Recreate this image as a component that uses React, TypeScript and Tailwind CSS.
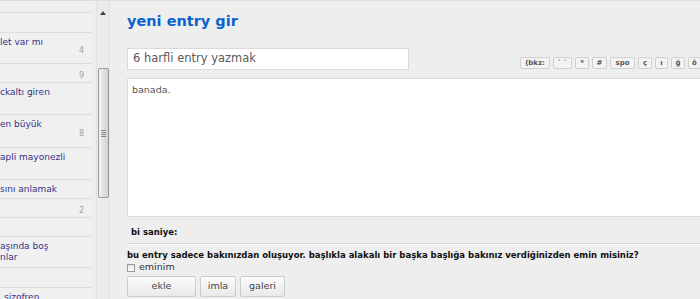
import React from 'react';

type Topic = { h: number; lines: string[]; count?: string; indent?: number };

const topics: Topic[] = [
  { h: 12, lines: [] },
  { h: 20, lines: [] },
  { h: 31, lines: ['let var mı'], count: '4' },
  { h: 19, lines: [], count: '9' },
  { h: 32, lines: ['ckaltı giren'] },
  { h: 33, lines: ['en büyük'], count: '8' },
  { h: 32, lines: ['apli mayonezli'] },
  { h: 19, lines: ['sını anlamak'] },
  { h: 19, lines: [], count: '2' },
  { h: 19, lines: [] },
  { h: 31, lines: ['aşında boş', 'nlar'] },
  { h: 20, lines: [] },
  { h: 30, lines: ['sizofren'], indent: 4 },
];

const toolButtons = [
  { label: '(bkz:', w: 'w-[30px]' },
  { label: '` `', w: 'w-[19px]' },
  { label: '*', w: 'w-[14px]' },
  { label: '#', w: 'w-[15px]' },
  { label: 'spo', w: 'w-[25px]' },
  { label: 'ç', w: 'w-[14px]' },
  { label: 'ı', w: 'w-[13px]' },
  { label: 'ğ', w: 'w-[14px]' },
  { label: 'ö', w: 'w-[13px]' },
];

const Sidebar: React.FC = () => {
  return (
    <div className="w-[92px] shrink-0 overflow-hidden bg-[#f0f0f0]">
      {topics.map((t, i) => (
        <div
          key={i}
          className="flex justify-between border-b border-[#dcdcdc] text-[9px] leading-[11px]"
          style={{ height: t.h }}
        >
          <div className="pt-[4px] text-[#35308a] whitespace-nowrap" style={{ paddingLeft: t.indent ?? 0 }}>
            {t.lines.map((l, j) => (
              <div key={j}>{l}</div>
            ))}
          </div>
          {t.count && (
            <div className="self-center pt-[4px] pr-[8px] text-[8px] text-[#a0a0a0]">{t.count}</div>
          )}
        </div>
      ))}
    </div>
  );
};

const Scrollbar: React.FC = () => {
  return (
    <div className="w-[28px] shrink-0 flex">
      <div className="w-[4px]" />
      <div className="w-[14px] bg-[#ebebeb] border-x border-[#e2e2e2] flex flex-col items-center pt-[10px]">
        <div className="w-0 h-0 border-x-[3px] border-x-transparent border-b-[4px] border-b-[#444]" />
        <div className="mt-[53px] w-[11px] h-[130px] rounded-[2px] border border-[#9a9a9a] bg-gradient-to-r from-[#f4f4f4] via-[#e2e2e2] to-[#cfcfcf] flex flex-col items-center justify-center gap-[1px]">
          <div className="w-[5px] h-px bg-[#888]" />
          <div className="w-[5px] h-px bg-[#888]" />
          <div className="w-[5px] h-px bg-[#888]" />
          <div className="w-[5px] h-px bg-[#888]" />
        </div>
      </div>
    </div>
  );
};

const App: React.FC = () => {
  return (
    <div className="w-[700px] h-[299px] overflow-hidden flex bg-[#eeeeee] border-t border-[#dddddd] font-['DejaVu_Sans',sans-serif]">
      <Sidebar />
      <Scrollbar />
      <div className="flex-1 min-w-0 pl-[7px] overflow-hidden">
        <h1 className="mt-[10px] text-[14.5px] leading-[21px] font-bold text-[#0b63cf]">yeni entry gir</h1>

        <div className="mt-[16px] flex items-end w-[700px]">
          <div className="w-[282px] h-[22px] bg-white border border-[#dadada] pl-[5px] flex items-center text-[11.5px] text-[#5a5a5a]">
            6 harfli entry yazmak
          </div>
          <div className="ml-[111px] mb-[1px] flex gap-[3px]">
            {toolButtons.map((b) => (
              <div
                key={b.label}
                className={`${b.w} h-[12px] shrink-0 flex items-center justify-center rounded-[2px] border border-[#cfcfcf] bg-[#f3f3f3] text-[7px] font-bold text-[#555] leading-none`}
              >
                {b.label}
              </div>
            ))}
          </div>
        </div>

        <div className="mt-[8px] w-[700px] h-[139px] bg-white border border-[#dcdcdc] px-[4px] pt-[4px] text-[9.5px] leading-[14px] text-[#555]">
          banada.
        </div>

        <div className="mt-[8px] pl-[4px] text-[8.5px] leading-[14px] font-bold text-[#111]">bi saniye:</div>
        <div className="mt-[4px] w-[700px] border-t border-[#d8d8d8] border-b border-b-[#f8f8f8]" />

        <div className="mt-[4px] text-[8.5px] leading-[13px] font-bold text-[#111] whitespace-nowrap">
          bu entry sadece bakınızdan oluşuyor. başlıkla alakalı bir başka başlığa bakınız verdiğinizden emin misiniz?
        </div>
        <label className="flex items-center gap-[4px] h-[11px] text-[9.5px] text-[#333]">
          <span className="w-[8px] h-[8px] border border-[#999] bg-gradient-to-b from-[#e8e8e8] to-white" />
          eminim
        </label>
        <div className="mt-[3px] flex gap-[4px]">
          {[
            { label: 'ekle', w: 'w-[69px]' },
            { label: 'imla', w: 'w-[36px]' },
            { label: 'galeri', w: 'w-[45px]' },
          ].map((b) => (
            <button
              key={b.label}
              className={`${b.w} h-[21px] rounded-[2px] border border-[#cccccc] bg-gradient-to-b from-[#fbfbfb] to-[#e9e9e9] text-[9.5px] text-[#444]`}
            >
              {b.label}
            </button>
          ))}
        </div>
      </div>
    </div>
  );
};

export default App;
